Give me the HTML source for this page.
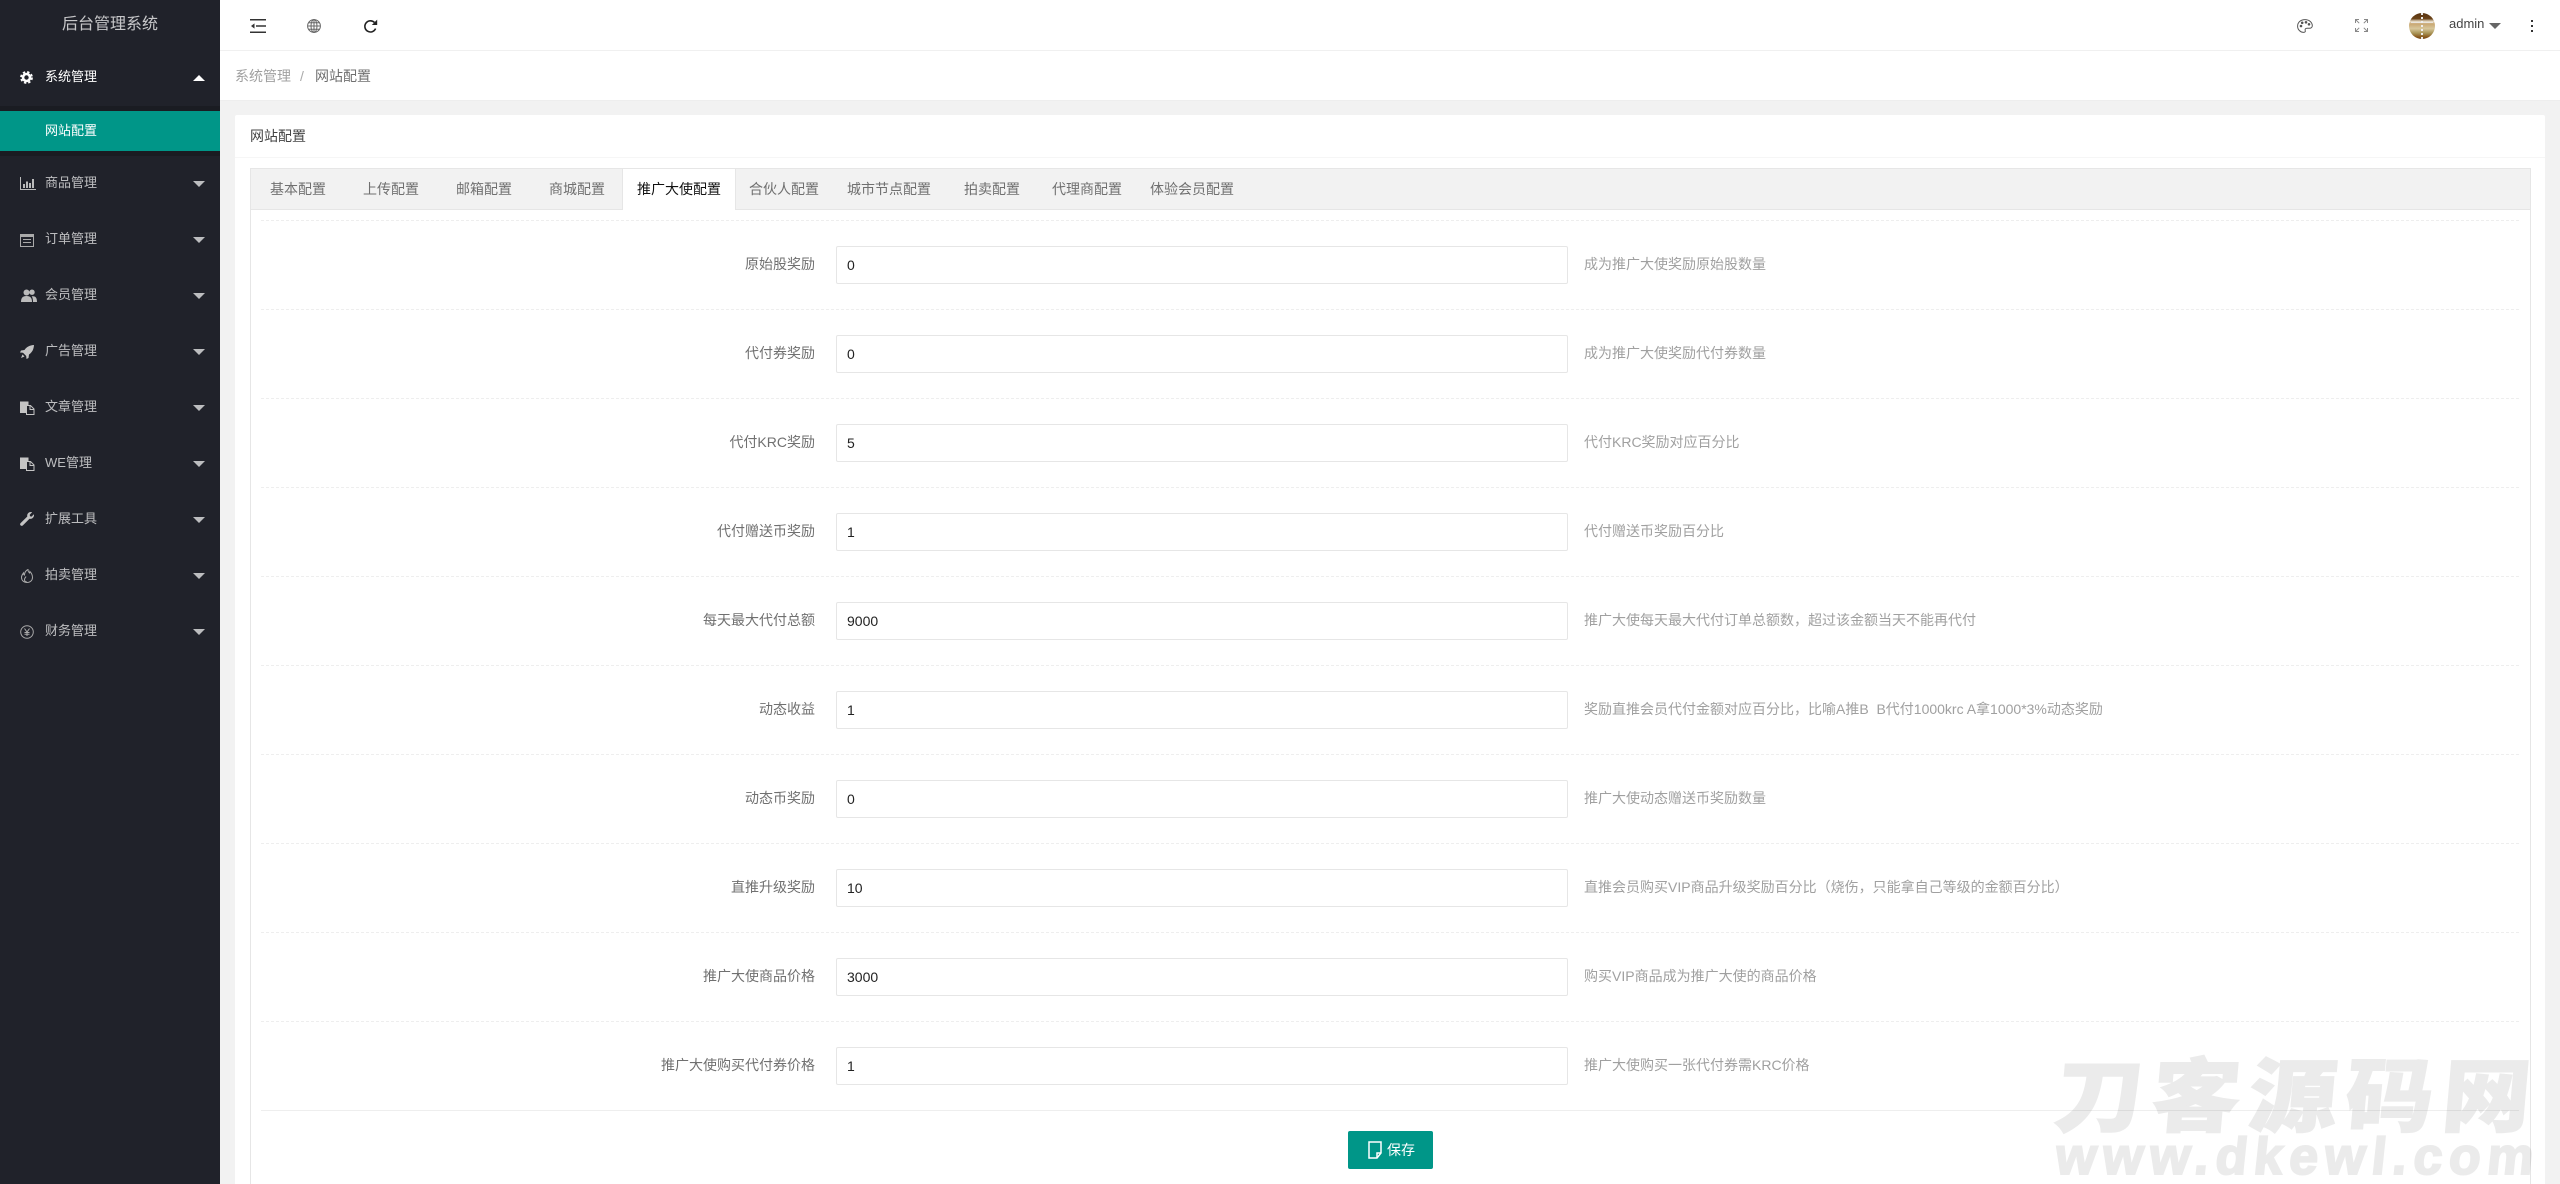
<!DOCTYPE html>
<html lang="zh-CN">
<head>
<meta charset="utf-8">
<title>后台管理系统</title>
<style>
*{box-sizing:border-box;margin:0;padding:0}
html,body{width:2560px;height:1184px;overflow:hidden;background:#f2f2f2}
body{position:relative;font-family:"Liberation Sans","Noto Sans CJK SC",sans-serif;font-size:14px;color:#666}
.a{position:absolute;white-space:nowrap}
#side{left:0;top:0;width:220px;height:1184px;background:#20222a;overflow:hidden}
.logo{left:0;top:0;width:220px;height:50px;line-height:50px;text-align:center;font-size:16px;color:rgba(255,255,255,.75)}
.m{left:45px;height:20px;line-height:20px;font-size:13px;color:rgba(255,255,255,.7)}
.ic{position:absolute;left:20px}
.tri{position:absolute;left:193px;width:0;height:0;border-left:6px solid transparent;border-right:6px solid transparent;border-top:6px solid rgba(255,255,255,.7)}
.tab{top:169px;height:40px;line-height:40px;color:#707070}
.lab{left:250px;width:565px;text-align:right;height:38px;line-height:36px;color:#707070}
.inp{left:836px;width:732px;height:38px;line-height:36px;border:1px solid #e6e6e6;border-radius:2px;background:#fff;padding-left:10px;color:#222;font-size:14px}
.hint{left:1584px;height:38px;line-height:36px;color:#a0a0a0}
.dash{left:261px;width:2258px;height:1px;border-top:1px dashed #eee}
.wm{color:#ebebeb;mix-blend-mode:multiply;transform-origin:left center}
</style>
</head>
<body>

<!-- header -->
<div class="a" style="left:220px;top:0;width:2340px;height:51px;background:#fff;border-bottom:1px solid #f0f0f0"></div>
<div class="a" style="left:220px;top:51px;width:2340px;height:50px;background:#fff;border-bottom:1px solid #eee"></div>

<svg class="a" style="left:250px;top:19px" width="16" height="14" viewBox="0 0 16 14"><path d="M0 .8h16M6 7h10M0 13.2h16" stroke="#333" stroke-width="1.5" fill="none"/><path d="M1 7l3.5-2.6v5.2z" fill="#333"/></svg>
<svg class="a" style="left:307px;top:19px" width="14" height="14" viewBox="0 0 14 14" fill="none" stroke="#666" stroke-width="1"><circle cx="7" cy="7" r="6.4"/><ellipse cx="7" cy="7" rx="3" ry="6.4"/><path d="M7 .6v12.8M.6 7h12.8M1.5 3.8h11M1.5 10.2h11"/></svg>
<svg class="a" style="left:363px;top:19px" width="15" height="15" viewBox="0 0 15 15" fill="none"><path d="M12.6 9.6A5.6 5.6 0 1 1 11.4 3.4" stroke="#222" stroke-width="1.6"/><path d="M14.2 .6v5.4H8.8z" fill="#222"/></svg>

<svg class="a" style="left:2297px;top:19px" width="16" height="14" viewBox="0 0 16 14" fill="none" stroke="#555" stroke-width="1"><path d="M8 .6C3.5.6.6 3.6.6 7.2c0 3.5 3 6.2 6 6.2 1.6 0 2-1 1.6-2-.4-1.2.4-2.2 1.8-2.2h2.4c1.600 0 2.900-.9 2.900-2.500C15.300 3.200 12 .6 8 .6z"/><circle cx="4" cy="7" r=".8" fill="#444"/><circle cx="5.200" cy="3.800" r=".8" fill="#444"/><circle cx="9" cy="3.300" r=".8" fill="#444"/><circle cx="12" cy="5.300" r=".8" fill="#444"/></svg>
<svg class="a" style="left:2355px;top:19px" width="13" height="13" viewBox="0 0 13 13" fill="none" stroke="#888" stroke-width="1"><path d="M.5 4V.5H4M.8.8l3.400 3.400M9 .5h3.500V4M12.200.8L8.800 4.200M.5 9v3.500H4M.8 12.200l3.400-3.400M12.500 9v3.500H9M12.200 12.200L8.800 8.800"/></svg>

<div class="a" style="left:2409px;top:13px;width:26px;height:26px;border-radius:50%;overflow:hidden;background:linear-gradient(180deg,#5a3512 0,#6b4318 22%,#e6dcc8 32%,#c9a873 42%,#d8c79c 60%,#a89355 78%,#8b5a1e 92%,#6e4212 100%)">
<div style="position:absolute;left:12px;top:0;width:2px;height:26px;border-left:2px dotted #eee"></div>
<div style="position:absolute;left:2px;top:9px;width:22px;height:1px;background:#eee;opacity:.8"></div>
</div>
<div class="a" style="left:2449px;top:14px;height:20px;line-height:20px;font-size:13px;color:#444">admin</div>
<div class="a" style="left:2489px;top:23px;width:0;height:0;border-left:6px solid transparent;border-right:6px solid transparent;border-top:6px solid #666"></div>
<svg class="a" style="left:2530px;top:19px" width="4" height="14" viewBox="0 0 4 14"><path d="M1 1h2v2H1zM1 6h2v2H1zM1 11h2v2H1z" fill="#333"/></svg>

<!-- breadcrumb -->
<div class="a" style="left:235px;top:66px;height:20px;line-height:20px;color:#a0a0a0">系统管理</div>
<div class="a" style="left:300px;top:66px;height:20px;line-height:20px;color:#aaa">/</div>
<div class="a" style="left:315px;top:66px;height:20px;line-height:20px;color:#707070">网站配置</div>

<!-- card -->
<div class="a" style="left:235px;top:115px;width:2310px;height:1069px;background:#fff;border-radius:2px 2px 0 0"></div>
<div class="a" style="left:235px;top:157px;width:2310px;height:1px;background:#f6f6f6"></div>
<div class="a" style="left:250px;top:126px;height:20px;line-height:20px;color:#444">网站配置</div>

<!-- tab box -->
<div class="a" style="left:250px;top:168px;width:2281px;height:1016px;border:1px solid #e6e6e6;border-bottom:0;background:#fff"></div>
<div class="a" style="left:251px;top:169px;width:2279px;height:41px;background:#f2f2f2;border-bottom:1px solid #e6e6e6"></div>
<div class="a" style="left:622px;top:169px;width:114px;height:41px;background:#fff;border-left:1px solid #e6e6e6;border-right:1px solid #e6e6e6"></div>
<div class="a tab" style="left:270px">基本配置</div>
<div class="a tab" style="left:363px">上传配置</div>
<div class="a tab" style="left:456px">邮箱配置</div>
<div class="a tab" style="left:549px">商城配置</div>
<div class="a tab" style="left:637px;color:#111">推广大使配置</div>
<div class="a tab" style="left:749px">合伙人配置</div>
<div class="a tab" style="left:847px">城市节点配置</div>
<div class="a tab" style="left:964px">拍卖配置</div>
<div class="a tab" style="left:1052px">代理商配置</div>
<div class="a tab" style="left:1150px">体验会员配置</div>

<!-- rows -->
<div class="a dash" style="top:220px"></div>
<div class="a lab" style="top:246px">原始股奖励</div><div class="a inp" style="top:246px">0</div><div class="a hint" style="top:246px">成为推广大使奖励原始股数量</div>
<div class="a dash" style="top:309px"></div>
<div class="a lab" style="top:335px">代付券奖励</div><div class="a inp" style="top:335px">0</div><div class="a hint" style="top:335px">成为推广大使奖励代付券数量</div>
<div class="a dash" style="top:398px"></div>
<div class="a lab" style="top:424px">代付KRC奖励</div><div class="a inp" style="top:424px">5</div><div class="a hint" style="top:424px">代付KRC奖励对应百分比</div>
<div class="a dash" style="top:487px"></div>
<div class="a lab" style="top:513px">代付赠送币奖励</div><div class="a inp" style="top:513px">1</div><div class="a hint" style="top:513px">代付赠送币奖励百分比</div>
<div class="a dash" style="top:576px"></div>
<div class="a lab" style="top:602px">每天最大代付总额</div><div class="a inp" style="top:602px">9000</div><div class="a hint" style="top:602px">推广大使每天最大代付订单总额数，超过该金额当天不能再代付</div>
<div class="a dash" style="top:665px"></div>
<div class="a lab" style="top:691px">动态收益</div><div class="a inp" style="top:691px">1</div><div class="a hint" style="top:691px;white-space:pre">奖励直推会员代付金额对应百分比，比喻A推B  B代付1000krc A拿1000*3%动态奖励</div>
<div class="a dash" style="top:754px"></div>
<div class="a lab" style="top:780px">动态币奖励</div><div class="a inp" style="top:780px">0</div><div class="a hint" style="top:780px">推广大使动态赠送币奖励数量</div>
<div class="a dash" style="top:843px"></div>
<div class="a lab" style="top:869px">直推升级奖励</div><div class="a inp" style="top:869px">10</div><div class="a hint" style="top:869px">直推会员购买VIP商品升级奖励百分比（烧伤，只能拿自己等级的金额百分比）</div>
<div class="a dash" style="top:932px"></div>
<div class="a lab" style="top:958px">推广大使商品价格</div><div class="a inp" style="top:958px">3000</div><div class="a hint" style="top:958px">购买VIP商品成为推广大使的商品价格</div>
<div class="a dash" style="top:1021px"></div>
<div class="a lab" style="top:1047px">推广大使购买代付券价格</div><div class="a inp" style="top:1047px">1</div><div class="a hint" style="top:1047px">推广大使购买一张代付券需KRC价格</div>
<div class="a" style="left:261px;top:1110px;width:2258px;height:1px;background:#eee"></div>

<!-- save button -->
<div class="a" style="left:1348px;top:1131px;width:85px;height:38px;background:#009688;border-radius:2px"></div>
<svg class="a" style="left:1368px;top:1141px" width="14" height="18" viewBox="0 0 14 18" fill="none" stroke="#fff" stroke-width="1.500"><path d="M1 1h12v11l-4 5H1z"/><path d="M13 12H9v5"/></svg>
<div class="a" style="left:1387px;top:1140px;height:20px;line-height:20px;color:#fff">保存</div>

<!-- sidebar -->
<div class="a" id="side">
<div class="a logo">后台管理系统</div>
<div class="a" style="left:0;top:106px;width:220px;height:50px;background:#1a1c22"></div>
<div class="a" style="left:0;top:111px;width:220px;height:40px;background:#009688"></div>

<svg class="ic" style="top:71px" width="13" height="13" viewBox="0 0 13 13" fill="none" stroke="#fff"><circle cx="6.500" cy="6.500" r="3.500" stroke-width="2.600"/><circle cx="6.500" cy="6.500" r="5.500" stroke-width="1.800" stroke-dasharray="2.400 2"/></svg>
<div class="a m" style="top:67px;color:#fff">系统管理</div>
<div class="tri" style="top:75px;border-top:0;border-bottom:6px solid #fff"></div>

<div class="a m" style="top:121px;color:#fff">网站配置</div>

<svg class="ic" style="top:177px" width="16" height="13" viewBox="0 0 16 13" fill="#bbb"><path d="M0 0h1v12h15v1H0z"/><path d="M3 7h2v4H3zM6 4.500h2V11H6zM9 6h2v5H9zM12 2h2v9h-2z"/></svg>
<div class="a m" style="top:173px">商品管理</div>
<div class="tri" style="top:181px"></div>

<svg class="ic" style="top:233px" width="14" height="14" viewBox="0 0 14 14" fill="none"><path d="M.5 1.500h13v12H.5z" stroke="#aaa"/><path d="M1 1.500h12V4H1zM3 6h8v1H3zM3 9h8v1H3z" fill="#aaa"/></svg>
<div class="a m" style="top:229px">订单管理</div>
<div class="tri" style="top:237px"></div>

<svg class="ic" style="left:21px;top:289px" width="16" height="13" viewBox="0 0 16 13" fill="#bbb"><circle cx="5.500" cy="3.500" r="3"/><path d="M0 13c0-4 1.500-6 5.500-6s5.500 2 5.500 6z"/><circle cx="11" cy="3.200" r="2.700"/><path d="M12 13h4c0-3.500-1-5.800-4-5.800-.5 0-.9.100-1.300.2 1 1.300 1.300 3.100 1.300 5.600z"/></svg>
<div class="a m" style="top:285px">会员管理</div>
<div class="tri" style="top:293px"></div>

<svg class="ic" style="top:345px" width="14" height="14" viewBox="0 0 14 14" fill="#c4c4c4"><path d="M14 0c-.3 4.500-2 7.500-5 9.500L8.500 13l-2 1-.3-3L3 7.800 0 7.500l1-2 3.500-.5C6.500 2 9.500.3 14 0z"/><path d="M2.500 9.500L4.500 11.500 1 13z"/></svg>
<div class="a m" style="top:341px">广告管理</div>
<div class="tri" style="top:349px"></div>

<svg class="ic" style="top:400px" width="15" height="15" viewBox="0 0 15 15"><path d="M0 1.500h8.500V5H6v8H0z" fill="#c4c4c4"/><path d="M6.500 5.500h4l3.500 3.500v5.500H6.500z" fill="none" stroke="#c4c4c4"/><path d="M10 5.500V9.500h4" fill="none" stroke="#c4c4c4"/></svg>
<div class="a m" style="top:397px">文章管理</div>
<div class="tri" style="top:405px"></div>

<svg class="ic" style="top:456px" width="15" height="15" viewBox="0 0 15 15"><path d="M0 1.500h8.500V5H6v8H0z" fill="#c4c4c4"/><path d="M6.500 5.500h4l3.500 3.500v5.500H6.500z" fill="none" stroke="#c4c4c4"/><path d="M10 5.500V9.500h4" fill="none" stroke="#c4c4c4"/></svg>
<div class="a m" style="top:453px">WE管理</div>
<div class="tri" style="top:461px"></div>

<svg class="ic" style="top:512px" width="14" height="14" viewBox="0 0 14 14" fill="#c4c4c4"><path d="M14 3.200c0 2.300-2.200 4.100-4.500 3.500L3 13.300c-.7.800-1.700.8-2.400.1s-.7-1.700.1-2.400l6.600-6.500C6.700 2.200 8.500 0 10.800 0c.5 0 .9.100 1.300.2L9.700 2.700l.3 1.600 1.600.3 2.200-2.400c.1.300.2.600.2 1z"/></svg>
<div class="a m" style="top:509px">扩展工具</div>
<div class="tri" style="top:517px"></div>

<svg class="ic" style="left:21px;top:569px" width="12" height="14" viewBox="0 0 12 14" fill="none" stroke="#aaa" stroke-width="1"><path d="M6 13.500c-3 0-5.500-2-5.500-5 0-2 1-3.300 2-4.500 0 1 .3 1.700 1 2C3.500 3.500 5 1.500 7 .5c-.3 1.500.5 2.500 1.500 3.500.3-.5.4-1 .4-1.500 1.500 1.500 2.600 3.500 2.600 6 0 3-2.500 5-5.500 5z"/><path d="M6 13c-1.500 0-2.500-1-2.500-2.500 0-1.200 1-2 1.500-3"/></svg>
<div class="a m" style="top:565px">拍卖管理</div>
<div class="tri" style="top:573px"></div>

<svg class="ic" style="top:625px" width="14" height="14" viewBox="0 0 14 14" fill="none" stroke="#aaa" stroke-width="1"><circle cx="7" cy="7" r="6.300"/><path d="M4.500 3.500L7 7l2.500-3.500M7 7v4M4.500 7.500h5M4.500 9.300h5"/></svg>
<div class="a m" style="top:621px">财务管理</div>
<div class="tri" style="top:629px"></div>
</div>

<!-- watermark -->
<div class="a wm" style="left:2056px;top:1043px;height:96px;line-height:96px;font-family:'Noto Sans CJK SC','Liberation Sans',sans-serif;font-weight:900;font-size:80px;letter-spacing:8px;-webkit-text-stroke:1.500px #ebebeb;transform:skewX(-5deg) scaleX(1.1)">刀客源码网</div>
<div class="a wm" style="left:2056px;top:1132px;height:50px;line-height:50px;font-family:'Liberation Sans',sans-serif;font-weight:700;font-size:52px;letter-spacing:6.500px;-webkit-text-stroke:2px #ebebeb;transform:skewX(-6deg)">www.dkewl.com</div>

</body>
</html>
